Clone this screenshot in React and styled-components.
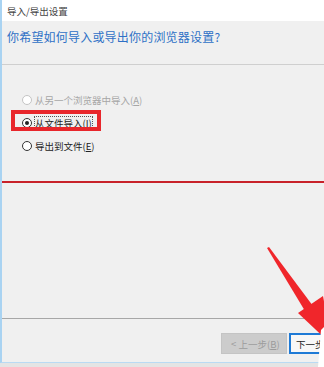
import styled, { createGlobalStyle } from "styled-components";

const GlobalStyle = createGlobalStyle`
  html, body {
    margin: 0;
    padding: 0;
    background: #e4e4e4;
  }
  body {
    font-family: "Noto Sans CJK SC", "Noto Sans", "Liberation Sans", sans-serif;
  }
`;

const Screen = styled.div`
  position: relative;
  width: 324px;
  height: 367px;
  overflow: hidden;
`;

const Window = styled.div`
  position: relative;
  height: 362px;
  display: flex;
  flex-direction: column;
  background: #f0f0f0;
  border-left: 2px solid #a9d3f2;
  border-bottom: 1px solid #b9daf3;
  overflow: hidden;
`;

const TitleBar = styled.div`
  height: 21px;
  display: flex;
  align-items: center;
  padding-left: 5px;
  background: #ffffff;
  color: #444;
  font-size: 9.5px;
`;

const Header = styled.div`
  height: 44px;
  padding: 7px 0 0 5px;
  box-sizing: border-box;
  border-bottom: 1px solid #cfcfcf;
`;

const Heading = styled.h1`
  margin: 0;
  font-size: 12px;
  font-weight: normal;
  color: #2e70c6;
  letter-spacing: 0.2px;
`;

const Content = styled.div`
  flex: 1;
  display: flex;
  flex-direction: column;
`;

const OptionList = styled.div`
  display: flex;
  flex-direction: column;
  padding: 23px 0 0 20px;
`;

const Option = styled.label`
  position: relative;
  height: 23px;
  display: flex;
  align-items: center;
  gap: 2px;
  font-size: 9.5px;
  color: ${(p) => (p.disabled ? "#a6a6a6" : "#222")};

  ${(p) =>
    p.highlighted &&
    `
    &::after {
      content: "";
      position: absolute;
      left: -11px;
      top: -1px;
      width: 82px;
      height: 13px;
      border: 4px solid #e8262b;
    }
  `}
`;

const Radio = styled.span`
  flex-shrink: 0;
  width: 8px;
  height: 8px;
  border-radius: 50%;
  border: 1px solid ${(p) => (p.disabled ? "#c4c4c4" : "#333")};
  background: #fff;
  display: flex;
  align-items: center;
  justify-content: center;

  &::after {
    content: "";
    width: 4px;
    height: 4px;
    border-radius: 50%;
    background: ${(p) => (p.checked ? "#222" : "transparent")};
  }
`;

const OptionText = styled.span`
  border: 1px dotted ${(p) => (p.focused ? "#555" : "transparent")};
  line-height: 12px;
`;

const RedRule = styled.div`
  margin-top: 24px;
  height: 2px;
  background: #c8222a;
  margin-left: -2px;
`;

const Footer = styled.div`
  height: 44px;
  border-top: 1px solid #a7a7a7;
  display: flex;
  align-items: flex-start;
  gap: 2px;
  padding: 14px 0 0 219px;
  box-sizing: border-box;
`;

const Button = styled.div`
  flex-shrink: 0;
  height: 21px;
  width: ${(p) => p.width}px;
  box-sizing: border-box;
  display: flex;
  align-items: center;
  padding-left: ${(p) => (p.primary ? 5 : 9)}px;
  font-size: 9.5px;
  white-space: nowrap;
  background: ${(p) => (p.primary ? "#f7f7f7" : "#cccccc")};
  color: ${(p) => (p.primary ? "#222" : "#9c9c9c")};
  border: ${(p) => (p.primary ? "2px solid #1e7ad6" : "1px solid #c4c4c4")};
`;

const Overlay = styled.svg`
  position: absolute;
  left: 0;
  top: 0;
  pointer-events: none;
`;

export default function App() {
  return (
    <Screen>
      <GlobalStyle />
      <Window>
        <TitleBar>导入/导出设置</TitleBar>
        <Header>
          <Heading>你希望如何导入或导出你的浏览器设置?</Heading>
        </Header>
        <Content>
          <OptionList>
            <Option disabled>
              <Radio disabled />
              <OptionText>从另一个浏览器中导入(<u>A</u>)</OptionText>
            </Option>
            <Option highlighted>
              <Radio checked />
              <OptionText focused>从文件导入(<u>I</u>)</OptionText>
            </Option>
            <Option>
              <Radio />
              <OptionText>导出到文件(<u>E</u>)</OptionText>
            </Option>
          </OptionList>
          <RedRule />
        </Content>
        <Footer>
          <Button width={66}>&lt; 上一步(<u>B</u>)</Button>
          <Button primary width={72}>下一步(<u>N</u>)</Button>
        </Footer>
      </Window>
      <Overlay width="324" height="367" viewBox="0 0 324 367">
        <polygon points="267,248 269,247 313,306 305,311" fill="#f0262b" />
        <polygon points="298,313 323,296 332,345" fill="#f0262b" />
        <polygon points="321,330 324,327 324,367 318,367" fill="#ffffff" />
      </Overlay>
    </Screen>
  );
}
